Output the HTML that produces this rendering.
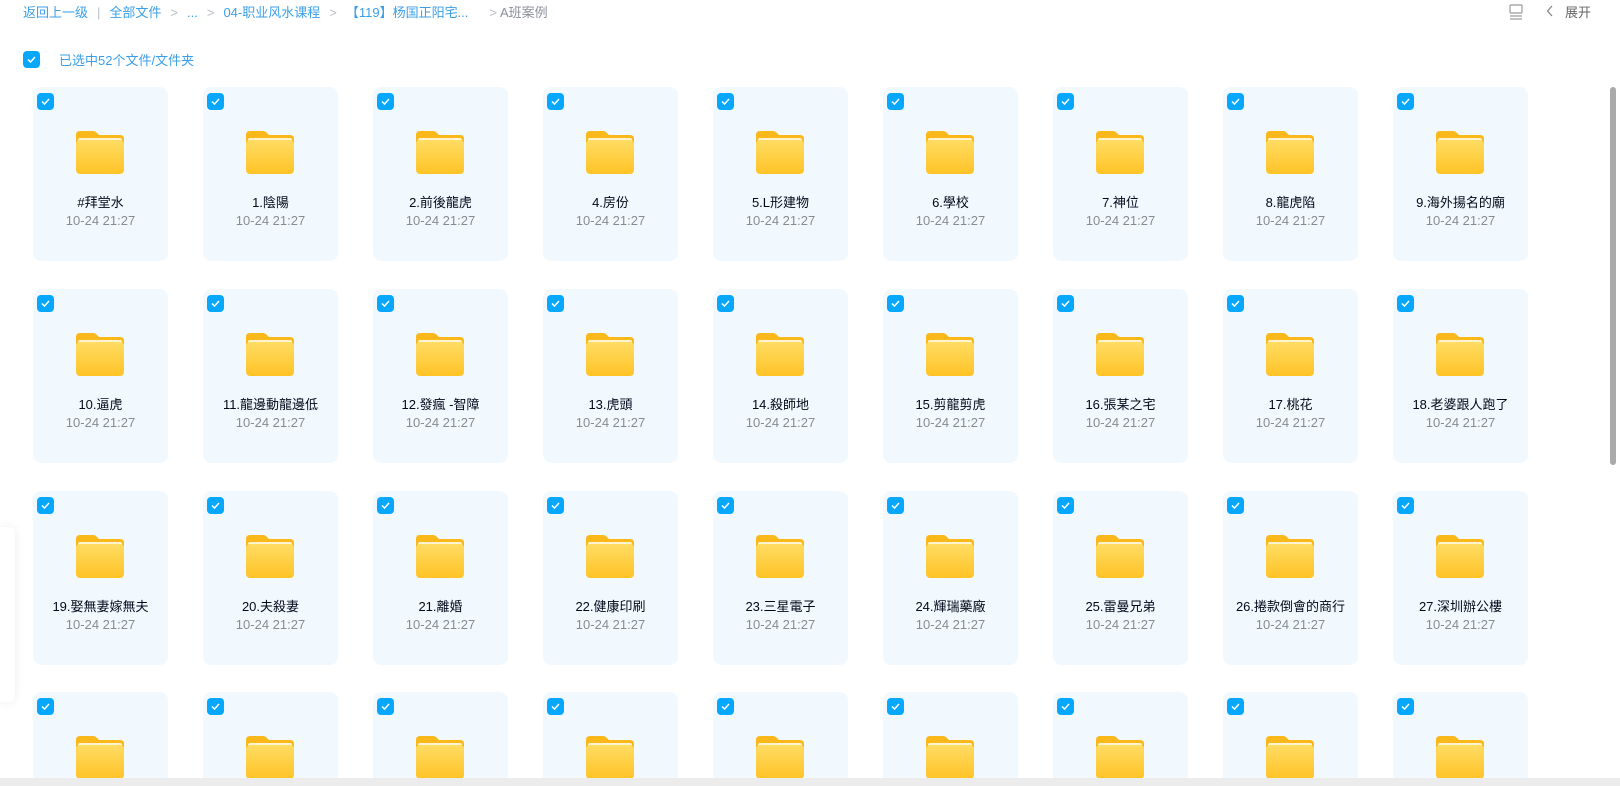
<!DOCTYPE html>
<html style="width:1620px;height:786px;overflow:hidden"><head><meta charset="utf-8"><style>
*{margin:0;padding:0;box-sizing:border-box}
body{width:1620px;height:786px;overflow:hidden;background:#fff;font-family:"Liberation Sans","Noto Sans CJK SC",sans-serif;position:relative}
.wrap{position:absolute;left:0;top:0;width:1620px;height:786px;overflow:hidden}
.bc{position:absolute;top:4px;left:23px;font-size:13px;color:#3b9fe8;white-space:nowrap;line-height:18px}
.bc span{margin-right:9px}
.bc .g{color:#b8bec8}
.bc .l{color:#8a8f99}
.cb{position:absolute;width:17px;height:17px;border-radius:4px;background:#06a7ff}
.cb svg{position:absolute;left:3px;top:3px}
.sel{position:absolute;left:59px;top:50px;font-size:13px;color:#3b9fe8}
.card{position:absolute;width:135px;height:174px;background:#f2f9fe;border-radius:8px}
.card .cb{left:4px;top:6px}
.card .fd{position:absolute;left:43px;top:44px}
.card .n{position:absolute;top:105px;width:100%;text-align:center;font-size:13px;color:#03081a}
.card .d{position:absolute;top:126px;width:100%;text-align:center;font-size:13px;color:#868b96}
.sb{position:absolute;left:1610px;top:87px;width:6px;height:378px;background:#aaa;border-radius:3px}
.bot{position:absolute;left:0;top:778px;width:1620px;height:8px;background:#ececec}
.lp{position:absolute;left:0;top:527px;width:15px;height:175px;background:#fff;box-shadow:0 0 10px rgba(0,0,0,.08);border-radius:0 6px 6px 0}
</style></head><body><div class="wrap">
<div class="bc"><span>返回上一级</span><span class="g">|</span><span>全部文件</span><span class="g">&gt;</span><span>...</span><span class="g">&gt;</span><span>04-职业风水课程</span><span class="g">&gt;</span><span>【119】杨国正阳宅...</span><span class="g" style="margin-left:12px">&gt;</span><span class="l" style="margin-left:-6px">A班案例</span></div>
<svg style="position:absolute;left:1509px;top:4px" width="14" height="16" viewBox="0 0 14 16"><rect x="1" y="1" width="12" height="8" rx="1" fill="none" stroke="#999" stroke-width="1.2"/><line x1="1" y1="12" x2="13" y2="12" stroke="#999" stroke-width="1.2"/><line x1="1" y1="15" x2="13" y2="15" stroke="#999" stroke-width="1.2"/></svg>
<svg style="position:absolute;left:1546px;top:5px" width="8" height="12" viewBox="0 0 8 12"><path d="M6 1 L1.5 6 L6 11" fill="none" stroke="#888" stroke-width="1.3"/></svg>
<div style="position:absolute;left:1565px;top:2px;font-size:13px;color:#666">展开</div>
<div class="cb" style="left:23px;top:51px"><svg width="11" height="11" viewBox="0 0 11 11"><path d="M2 5.5 L4.5 8 L9 3" fill="none" stroke="#fff" stroke-width="1.5"/></svg></div>
<div class="sel">已选中52个文件/文件夹</div>
<div class="lp"></div>
<div id="g"></div>
<div class="sb"></div>
<div class="bot"></div>
</div>
<script>
var names=["#拜堂水","1.陰陽","2.前後龍虎","4.房份","5.L形建物","6.學校","7.神位","8.龍虎陷","9.海外揚名的廟","10.逼虎","11.龍邊動龍邊低","12.發瘋 -智障","13.虎頭","14.殺師地","15.剪龍剪虎","16.張某之宅","17.桃花","18.老婆跟人跑了","19.娶無妻嫁無夫","20.夫殺妻","21.離婚","22.健康印刷","23.三星電子","24.輝瑞藥廠","25.雷曼兄弟","26.捲款倒會的商行","27.深圳辦公樓"];
var tops=[87,289,491,692],h="";
var folder='<svg class="fd" width="48" height="43" viewBox="0 0 48 43"><defs><linearGradient id="fg" x1="0" y1="0" x2="0" y2="1"><stop offset="0" stop-color="#ffdc63"/><stop offset="1" stop-color="#ffc326"/></linearGradient></defs><path d="M4 0 H17 Q19 0 21 2 L23 4 H44 Q48 4 48 8 V14 H0 V4 Q0 0 4 0Z" fill="#fbb81a"/><rect x="2" y="7" width="44" height="10" rx="2" fill="#fff3d0"/><rect x="0" y="9" width="48" height="34" rx="4" fill="url(#fg)"/></svg>';
for(var r=0;r<4;r++)for(var c=0;c<9;c++){var i=r*9+c;var x=33+c*170;
h+='<div class="card" style="left:'+x+'px;top:'+tops[r]+'px"><div class="cb"><svg width="11" height="11" viewBox="0 0 11 11"><path d="M2 5.5 L4.5 8 L9 3" fill="none" stroke="#fff" stroke-width="1.5"/></svg></div>'+folder+(r<3?'<div class="n">'+names[i]+'</div><div class="d">10-24 21:27</div>':'')+'</div>';}
document.getElementById("g").innerHTML=h;
</script>
</body></html>
